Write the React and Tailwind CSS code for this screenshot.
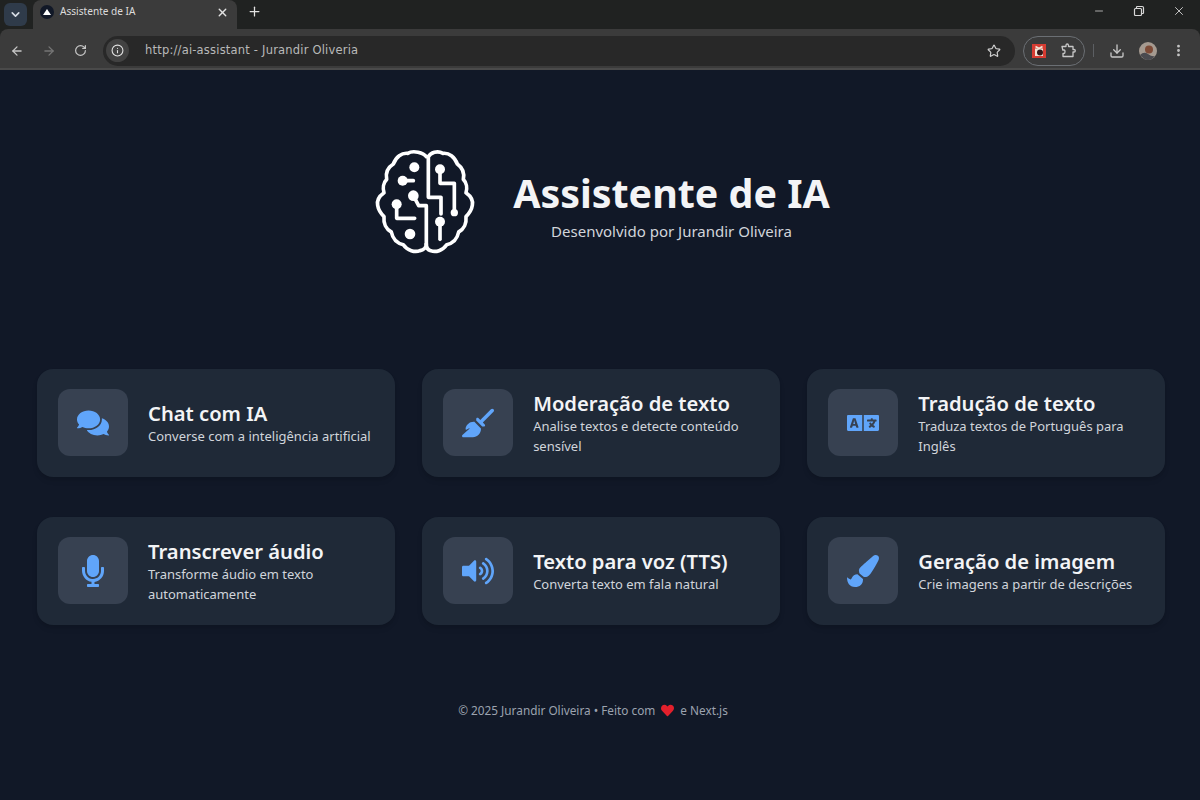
import React from "react";
import { ArrowLeft, ArrowRight, RotateCw, Info, Star, Download, ChevronDown, X, Plus, Minus, EllipsisVertical } from "lucide-react";
import { FaComments, FaLanguage, FaMicrophone, FaVolumeUp, FaPaintBrush, FaHeart } from "react-icons/fa";
import { FaBroom } from "react-icons/fa6";

const uiFont = { fontFamily: '"Noto Sans", "Open Sans", sans-serif' };

const features = [
  { title: "Chat com IA", text: "Converse com a inteligência artificial", Icon: FaComments },
  { title: "Moderação de texto", text: "Analise textos e detecte conteúdo sensível", Icon: FaBroom },
  { title: "Tradução de texto", text: "Traduza textos de Português para Inglês", Icon: FaLanguage },
  { title: "Transcrever áudio", text: "Transforme áudio em texto automaticamente", Icon: FaMicrophone },
  { title: "Texto para voz (TTS)", text: "Converta texto em fala natural", Icon: FaVolumeUp },
  { title: "Geração de imagem", text: "Crie imagens a partir de descrições", Icon: FaPaintBrush },
];

// Brain with circuit lines, drawn by hand
const BrainLogo = () => (
  <svg width="130" height="125" viewBox="0 0 390 375" className="-m-4 shrink-0" fill="none" stroke="#fff" strokeWidth="11" strokeLinecap="round" strokeLinejoin="round">
    <path d="M199 50C190 38 160 30 143 40C125 38 108 50 100 72C84 82 76 98 80 118C70 128 68 145 72 158C58 168 50 182 53 196C55 210 64 222 72 230C70 250 78 268 94 276C98 296 112 310 130 314C142 332 165 338 180 332C190 330 199 322 199 312" />
    <path d="M205 50C212 38 232 30 249 40C267 38 284 50 292 72C306 82 314 98 310 118C320 128 322 145 318 158C332 168 340 182 337 196C335 210 326 222 318 230C320 250 312 268 296 276C292 296 278 310 260 314C248 332 227 338 212 332C204 330 199 322 199 312" />
    <path d="M205 50V172H243V222" />
    <path d="M240 88V130H283V218" />
    <path d="M240 245V298" />
    <path d="M128 122H160" />
    <path d="M160 167L176 197H199V312" />
    <path d="M110 193V235H164" />
    <g fill="#fff" stroke="none">
      <circle cx="163" cy="82" r="15" />
      <circle cx="128" cy="122" r="15" />
      <circle cx="160" cy="167" r="16" />
      <circle cx="110" cy="193" r="15" />
      <circle cx="150" cy="282" r="16" />
      <circle cx="240" cy="88" r="15" />
      <circle cx="283" cy="218" r="11" />
      <circle cx="240" cy="245" r="15" />
    </g>
  </svg>
);

const BrowserChrome = () => (
  <div className="h-[70px] shrink-0 bg-[#202221]">
    <div className="flex h-[29px] items-end">
      <div className="mb-[3px] ml-1 flex h-[23px] w-[23px] items-center justify-center rounded-md bg-[#2f3b4a]">
        <ChevronDown size={13} strokeWidth={3} className="text-[#d5dbe3]" />
      </div>
      <div className="ml-[6px] flex h-[29px] w-[204px] items-center rounded-t-lg bg-[#3b3b3b] pb-[5px] pl-[7px] pr-[8px]">
        <span className="flex h-[14px] w-[14px] items-center justify-center rounded-full bg-[#111827]">
          <span className="h-0 w-0 border-x-[4px] border-b-[6px] border-x-transparent border-b-white" />
        </span>
        <span className="ml-[6px] flex-1 text-[10.1px] text-[#dcdcdc]" style={uiFont}>Assistente de IA</span>
        <X size={13} strokeWidth={2.5} className="text-[#e2e2e2]" />
      </div>
      <Plus size={15} strokeWidth={2} className="mb-[10px] ml-[10px] text-[#e2e2e2]" />
      <div className="mb-[11px] ml-auto flex items-center pr-[1px] text-[#d8d8d8]">
        <span className="flex w-10 justify-center"><Minus size={12} strokeWidth={1.5} /></span>
        <span className="flex w-10 justify-center">
          <svg width="12" height="12" viewBox="0 0 12 12" fill="none" stroke="currentColor" strokeWidth="1.2">
            <rect x="1.5" y="3.5" width="7" height="7" rx="1" />
            <path d="M3.5 3.5V2.2q0-.7.7-.7h5.1q1.2 0 1.2 1.2v5.1q0 .7-.7.7H8.5" />
          </svg>
        </span>
        <span className="flex w-10 justify-center"><X size={14} strokeWidth={1.5} /></span>
      </div>
    </div>
    <div className="flex h-[41px] items-center rounded-t-lg border-b-[2px] border-[#4a4a4a] bg-[#3b3b3b] pt-[4px] pl-[10px] pr-[13px] text-[#c7c7c7]">
      <ArrowLeft size={14} strokeWidth={2.2} />
      <ArrowRight size={14} strokeWidth={2.2} className="ml-[18px] text-[#767676]" />
      <RotateCw size={13} strokeWidth={2.2} className="ml-[18px]" />
      <div className="ml-[16px] flex h-[30px] w-[912px] items-center rounded-full bg-[#282828] pl-[3px] pr-[14px]">
        <span className="flex h-[23px] w-[23px] items-center justify-center rounded-full bg-[#424242]">
          <Info size={13} strokeWidth={2} className="text-[#e2e2e2]" />
        </span>
        <span className="ml-4 flex-1 pt-[1px] text-[11.5px] tracking-[0.2px] text-[#b9b9b9]" style={{ fontFamily: '"DejaVu Sans", sans-serif' }}>http://ai-assistant - Jurandir Oliveria</span>
        <Star size={14} strokeWidth={2} className="text-[#d0d0d0]" />
      </div>
      <div className="ml-2 flex h-[30px] w-[62px] items-center justify-between rounded-full border border-[#6b6f74] px-2">
        <svg width="14" height="14" viewBox="0 0 14 14">
          <rect width="14" height="14" fill="#d63c32" />
          <path d="M3 4.5H11V12H3Z" fill="#f1e4d6" />
          <path d="M3.5 2.5L7 4.5L10.5 2.5" fill="none" stroke="#f1e4d6" strokeWidth="1.6" />
          <circle cx="8" cy="8.5" r="3" fill="#33191a" />
        </svg>
        <svg width="15" height="15" viewBox="0 0 15 15" fill="none" stroke="#c7c7c7" strokeWidth="1.3" strokeLinejoin="round">
          <path d="M1 3.5H5V2.5Q5 1 6.2 1T7.5 2.5V3.5H12V6.5H13Q14.3 6.5 14.3 7.7T13 9H12V13.5H2V10.5H3Q4 10.5 4 8.7T3 7H1.8Z" />
        </svg>
      </div>
      <div className="ml-2 h-[13px] w-px bg-[#5c5f63]" />
      <Download size={16} strokeWidth={2} className="ml-[15px]" />
      <svg width="18" height="18" viewBox="0 0 18 18" className="ml-[14px]">
        <circle cx="9" cy="9" r="9" fill="#a59a90" />
        <circle cx="10" cy="7.5" r="4" fill="#7d4a36" />
        <path d="M1 13Q5 9 9 12T16 14Q13 18 9 18T1 13Z" fill="#4a4a4f" />
      </svg>
      <EllipsisVertical size={15} strokeWidth={2.5} className="ml-[14px]" />
    </div>
  </div>
);

const FeatureCard = ({ title, text, Icon }) => (
  <div className="flex h-[107.5px] items-center gap-5 rounded-2xl bg-[#1f2937] py-5 pl-[21px] pr-4 shadow-md">
    <div className="flex h-[67px] w-[70px] shrink-0 items-center justify-center rounded-xl bg-[#374151]">
      <Icon size={32} className="text-[#60a5fa]" />
    </div>
    <div className="min-w-0 pt-px">
      <h2 className="text-[20.2px] leading-[24px] font-semibold text-[#f3f4f6]">{title}</h2>
      <p className="mt-px text-[12.97px] leading-[20px] text-[#d1d5db]">{text}</p>
    </div>
  </div>
);

export default function App() {
  return (
    <div className="flex h-[800px] flex-col overflow-hidden bg-[#111827]" style={uiFont}>
      <BrowserChrome />
      <main className="flex flex-1 flex-col pl-[37px] pr-[35px]">
        <header className="mt-[81px] flex h-[103px] items-center justify-center gap-[39px] pl-[4px]">
          <BrainLogo />
          <div className="flex flex-col items-center pt-[6px]">
            <h1 className="text-[39.4px] leading-[50px] font-bold text-[#f3f4f6]">Assistente de IA</h1>
            <p className="mt-px text-[15px] leading-[24px] text-[#d1d5db]">Desenvolvido por Jurandir Oliveira</p>
          </div>
        </header>
        <section className="mt-[115px] grid grid-cols-3 gap-x-[27.5px] gap-y-[40.5px]">
          {features.map((f) => (
            <FeatureCard key={f.title} {...f} />
          ))}
        </section>
        <footer className="mt-[76.5px] flex items-center justify-center pr-[16px] text-[11.8px] leading-[18px] text-[#9ca3af]">
          <span>© 2025 Jurandir Oliveira • Feito com</span>
          <FaHeart size={13} className="mx-[6px] text-[#e3202c]" />
          <span>e Next.js</span>
        </footer>
      </main>
    </div>
  );
}
